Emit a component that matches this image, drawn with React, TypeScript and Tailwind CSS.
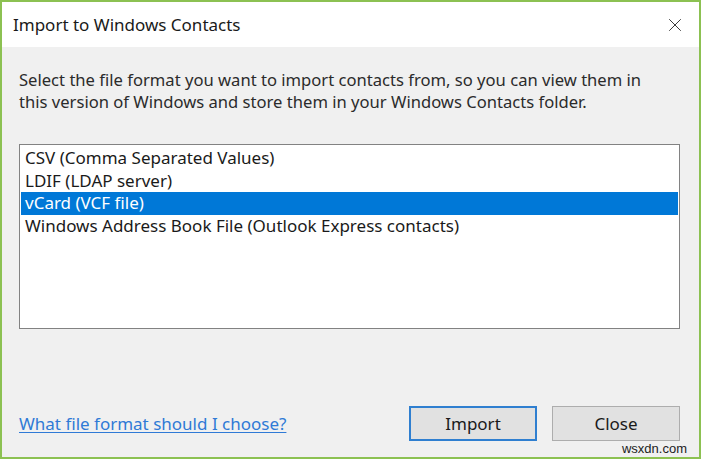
import { X } from "lucide-react";

const formats = [
  "CSV (Comma Separated Values)",
  "LDIF (LDAP server)",
  "vCard (VCF file)",
  "Windows Address Book File (Outlook Express contacts)",
];

export default function App() {
  return (
    <div
      className="relative w-[701px] h-[459px] border-2 border-[#8cc152] bg-[#f0f0f0] flex flex-col overflow-hidden"
      style={{ fontFamily: '"Noto Sans", "Open Sans", sans-serif' }}
    >
      {/* Title bar */}
      <div className="h-[45px] bg-white flex items-center justify-between pl-[11px] pr-[13px] shrink-0">
        <span className="text-[17px] text-[#1a1a1a]">Import to Windows Contacts</span>
        <X size={22} strokeWidth={0.9} className="text-[#111]" />
      </div>

      {/* Body */}
      <div className="flex-1 flex flex-col pl-[17px] pr-[19px] pt-[22px] pb-[16px]">
        <p className="text-[16.6px] leading-[22px] text-[#2b2b2b]">
          Select the file format you want to import contacts from, so you can view them in
          <br />
          this version of Windows and store them in your Windows Contacts folder.
        </p>

        <div className="mt-[31px] h-[185px] bg-white border border-[#828282] p-[1px] pt-[2px]">
          {formats.map((f, i) => (
            <div
              key={f}
              className={
                i === 2
                  ? "h-[22.5px] leading-[22.5px] pl-[4px] text-[17px] bg-[#0078d7] text-white"
                  : "h-[22.5px] leading-[22.5px] pl-[4px] text-[17px] text-[#1a1a1a]"
              }
            >
              {f}
            </div>
          ))}
        </div>

        <div className="mt-auto flex items-center justify-between">
          <a href="#" className="text-[17px] text-[#2f7ad6] underline underline-offset-2">
            What file format should I choose?
          </a>
          <div className="flex gap-[15px]">
            <button className="w-[128px] h-[35px] bg-[#e1e1e1] border-2 border-[#2f7fd0] text-[17px] text-[#1a1a1a]">
              Import
            </button>
            <button className="w-[128px] h-[35px] bg-[#e1e1e1] border border-[#adadad] text-[17px] text-[#1a1a1a]">
              Close
            </button>
          </div>
        </div>
      </div>

      <span
        className="absolute right-[12px] bottom-[1px] text-[13px] leading-[15px] text-[#222]"
        style={{ fontFamily: '"Liberation Sans", sans-serif' }}
      >
        wsxdn.com
      </span>
    </div>
  );
}
